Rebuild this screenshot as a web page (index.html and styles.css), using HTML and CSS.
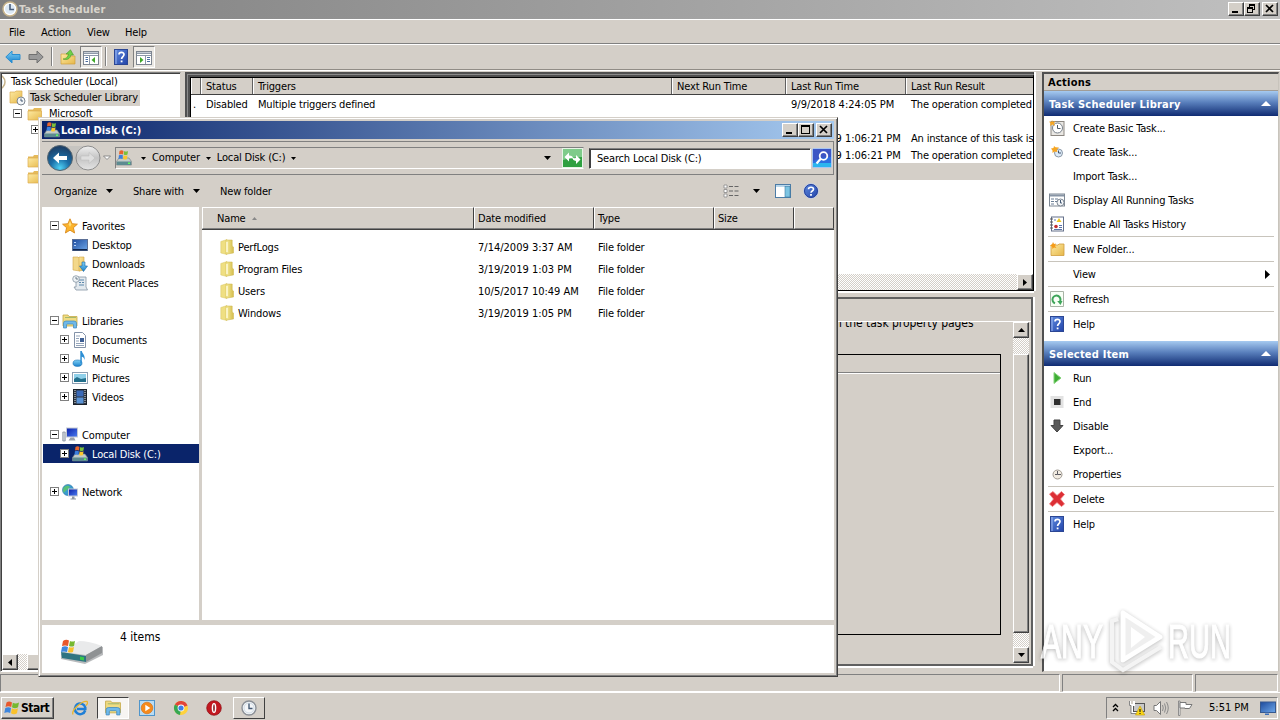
FILE: index.html
```html
<!DOCTYPE html>
<html lang="en">
<head>
  <meta charset="UTF-8" />
  <meta name="viewport" content="width=device-width, initial-scale=1.0"/>
  <title>Task Scheduler</title>
  <link rel="stylesheet" href="styles.css">
</head>
<body>
  <svg class="defs" width="0" height="0">
    <defs>
      <linearGradient id="gBlue" x1="0" y1="0" x2="0" y2="1"><stop offset="0" stop-color="#7fd0f5"/><stop offset="1" stop-color="#1b82cc"/></linearGradient>
      <linearGradient id="gFolder" x1="0" y1="0" x2="1" y2="1"><stop offset="0" stop-color="#fdeaa2"/><stop offset="1" stop-color="#e6b74a"/></linearGradient>
      <linearGradient id="gFile" x1="0" y1="0" x2="1" y2="0"><stop offset="0" stop-color="#f6ec9c"/><stop offset="1" stop-color="#d5bd4c"/></linearGradient>
      <linearGradient id="gScreen" x1="0" y1="0" x2="1" y2="1"><stop offset="0" stop-color="#0b1fa8"/><stop offset="1" stop-color="#4b7cf0"/></linearGradient>
      <linearGradient id="gDesk" x1="0" y1="0" x2="1" y2="1"><stop offset="0" stop-color="#1d4a9c"/><stop offset="1" stop-color="#6fa8ea"/></linearGradient>
      <linearGradient id="gHelp" x1="0" y1="0" x2="1" y2="1"><stop offset="0" stop-color="#5f8be0"/><stop offset="1" stop-color="#2243a8"/></linearGradient>
      <radialGradient id="gNav" cx="50%" cy="90%" r="85%"><stop offset="0" stop-color="#4fd2f5"/><stop offset=".45" stop-color="#1b6fa8"/><stop offset="1" stop-color="#1d3f66"/></radialGradient>
      <linearGradient id="gNavOff" x1="0" y1="0" x2="0" y2="1"><stop offset="0" stop-color="#f0f0f0"/><stop offset=".5" stop-color="#c4c4c4"/><stop offset="1" stop-color="#e4e4e4"/></linearGradient>
    </defs>
    <symbol id="clock" viewBox="0 0 16 16"><circle cx="8" cy="8" r="7" fill="#f4f6f8" stroke="#8a8f96" stroke-width="1.4"/><circle cx="8" cy="8" r="5" fill="none" stroke="#cfdbe6"/><path d="M8 3.5V8.5H11.5" fill="none" stroke="#445a74" stroke-width="1.4"/></symbol>
    <symbol id="clockGold" viewBox="0 0 16 16"><circle cx="8" cy="8" r="7" fill="#fff" stroke="#c7b48c" stroke-width="1.5"/><circle cx="8" cy="8" r="5" fill="#dce9f5"/><path d="M8 3V8.5H12" fill="none" stroke="#4a5f7c" stroke-width="1.6"/></symbol>
    <symbol id="arrowL" viewBox="0 0 16 16"><path d="M.8 8L7 2V5.5H15V10.5H7V14Z" fill="url(#gBlue)" stroke="#2b8ed0"/></symbol>
    <symbol id="arrowR" viewBox="0 0 16 16"><path d="M15.2 8L9 2V5.5H1V10.5H9V14Z" fill="#9a9a9a" stroke="#707070"/></symbol>
    <symbol id="folder" viewBox="0 0 16 16"><path d="M1 3.5H6L7 2H14.5V13.5H1Z" fill="#e5ba5a"/><path d="M1 5H14.5V14H1Z" fill="url(#gFolder)" stroke="#dcae50" stroke-width=".7"/></symbol>
    <symbol id="folderUp" viewBox="0 0 16 16"><path d="M1 5H8L9 7H15V15H1Z" fill="url(#gFolder)" stroke="#cf9d3e" stroke-width=".7"/><path d="M3 10C6 10 8 8 8.5 5H6L10.500 .8L13.500 6H11C10 10 7 11.500 3 10Z" fill="#6fd048" stroke="#3a8e1c" stroke-width=".5"/></symbol>
    <symbol id="folderClock" viewBox="0 0 17 16"><path d="M1 2H6L7 1H13V13H1Z" fill="url(#gFolder)" stroke="#dcae50" stroke-width=".7"/><circle cx="12" cy="11" r="4" fill="#f4f6f8" stroke="#7b8590"/><path d="M12 8.500V11H14" fill="none" stroke="#445a74"/></symbol>
    <symbol id="paneL" viewBox="0 0 16 14"><rect x=".5" y=".5" width="15" height="13" fill="#fff" stroke="#7d8590"/><path d="M1 1.500H15V3H1Z" fill="#8d98a8"/><path d="M1 4.500H15M6.500 5V13" stroke="#8d98a8"/><path d="M2.500 6.500H5M2.500 8.500H5M2.500 10.500H5" stroke="#4c6da0"/><path d="M12 6L8.500 9L12 12Z" fill="#3fa828"/></symbol>
    <symbol id="paneR" viewBox="0 0 16 14"><rect x=".5" y=".5" width="15" height="13" fill="#fff" stroke="#7d8590"/><path d="M1 1.500H15V3H1Z" fill="#8d98a8"/><path d="M1 4.500H15M9.500 5V13" stroke="#8d98a8"/><path d="M11 6.500H14M11 8.500H14M11 10.500H14" stroke="#4c6da0"/><path d="M4 6L7.500 9L4 12Z" fill="#3fa828"/></symbol>
    <symbol id="help" viewBox="0 0 14 16"><rect x=".5" y=".5" width="13" height="15" fill="url(#gHelp)" stroke="#2c4794"/><path d="M2 1V15" stroke="#9db7f0"/><path d="M5 5.600C5 2.600 10 2.600 10 5.500C10 7.500 7.600 7.600 7.600 10" fill="none" stroke="#fff" stroke-width="1.700"/><path d="M6.700 11.500H8.500V13.300H6.700Z" fill="#fff"/></symbol>
    <symbol id="helpRound" viewBox="0 0 16 16"><circle cx="8" cy="8" r="7.300" fill="url(#gHelp)" stroke="#c3cfe8"/><circle cx="8" cy="8" r="6.500" fill="none" stroke="#24409a"/><path d="M5.500 6.200C5.500 3.500 10.500 3.500 10.500 6.200C10.500 8 8 8 8 9.800" fill="none" stroke="#fff" stroke-width="1.600"/><path d="M7.100 11H8.900V12.700H7.100Z" fill="#fff"/></symbol>
    <symbol id="drive" viewBox="0 0 16 16"><path d="M3 8H13L15.500 11.500V15H.5V11.500Z" fill="#c3cbc8" stroke="#6d7b80" stroke-width=".6"/><path d="M1 11.500H15V15H1Z" fill="#5d8b90"/><path d="M12 12.500H14V14H12Z" fill="#5cff5c"/><path d="M3.500 1Q5.500 -.5 7.500 1L7 4.500Q5 3.500 3 4.500Z" fill="#e8642c"/><path d="M8.200 1Q10 2 12 1L11.500 4.500Q9.500 5.500 7.700 4.500Z" fill="#7cc03a"/><path d="M2.900 5.200Q5 4.200 6.900 5.200L6.500 9Q4.500 8 2.500 9Z" fill="#3c7fdc"/><path d="M7.600 5.200Q9.500 6.200 11.500 5.200L11 9Q9 10 7.100 9Z" fill="#fbc72e"/></symbol>
    <symbol id="winFlag" viewBox="0 0 16 16"><path d="M2.500 2.500Q5 .5 8 2.500L7.200 7Q4.500 5.500 1.500 7Z" fill="#e8582c"/><path d="M8.800 2.800Q11.500 4.500 15 2.500L14 7.300Q11 9 8 7.300Z" fill="#76b82f"/><path d="M1.300 8Q4.500 6.500 7 8L6.200 13Q3.500 11.300 .3 13Z" fill="#3e86dd"/><path d="M7.900 8.300Q11 10 13.900 8.300L13 13.300Q10 15 7 13.300Z" fill="#f9c12b"/></symbol>
    <symbol id="star" viewBox="0 0 16 16"><path d="M8 .8L10.100 5.700L15.400 6.200L11.400 9.700L12.600 15L8 12.200L3.400 15L4.600 9.700L.6 6.200L5.900 5.700Z" fill="#fcb42c" stroke="#d98a1e" stroke-width=".9"/><path d="M8 3L9.300 6.600L8 9L6.700 6.600Z" fill="#ffdf7a"/></symbol>
    <symbol id="desktop" viewBox="0 0 16 16"><rect x=".5" y="2.500" width="15" height="11" fill="url(#gDesk)" stroke="#5b6f96"/><path d="M1 12H15V13.500H1Z" fill="#10264f"/><path d="M2 5H4V6H2ZM2 8H4V9H2Z" fill="#b9d4f7"/></symbol>
    <symbol id="downloads" viewBox="0 0 16 16"><path d="M1 1H6L8 3V15L1 14Z" fill="#f3d88a" stroke="#d0a548" stroke-width=".6"/><path d="M7 1H12V14L7 15Z" fill="url(#gFolder)" stroke="#d0a548" stroke-width=".6"/><path d="M10 6H13V10H15.500L11.500 15.500L7.500 10H10Z" fill="url(#gBlue)" stroke="#1767a6" stroke-width=".6"/></symbol>
    <symbol id="recent" viewBox="0 0 16 16"><path d="M4 2H14V12L15.500 15H4L2 12H4Z" fill="#e3e9ee" stroke="#8796a3" stroke-width=".8"/><path d="M7 5H12M7 7.500H9M10 7.500H12M7 10H12" stroke="#5b87ab"/><circle cx="4" cy="4" r="3.300" fill="#eef2f5" stroke="#8796a3" stroke-width=".8"/><path d="M4 2V4H6" fill="none" stroke="#4f6474" stroke-width=".8"/></symbol>
    <symbol id="library" viewBox="0 0 16 16"><path d="M1 2H6L7 3.500H15V13H1Z" fill="#f1dc82" stroke="#c5a947" stroke-width=".8"/><path d="M3 4.500H14" stroke="#a5b86c"/><path d="M1.500 15V10Q1.500 8 4 8H12Q14.500 8 14.500 10V15H11.500V12Q11.500 11 10.500 11H5.500Q4.500 11 4.500 12V15Z" fill="#6fb9ea" stroke="#3d86bd" stroke-width=".7"/></symbol>
    <symbol id="doc" viewBox="0 0 16 16"><path d="M2.500 .5H10.500L13.500 3.500V15.500H2.500Z" fill="#fff" stroke="#8392a8"/><path d="M4 4H8M4 6.500H7M4 9H7M4 11.500H12M4 13.500H12" stroke="#93a4ba"/><rect x="8" y="6" width="4" height="4" fill="#3c5e94"/></symbol>
    <symbol id="music" viewBox="0 0 16 16"><ellipse cx="5.500" cy="12.200" rx="4.500" ry="3.200" fill="url(#gBlue)" stroke="#1a70b4" stroke-width=".6"/><path d="M8.300 12V0H9.800C10.300 3 13.500 4 12.500 9C12 6.500 11 6 9.800 5.800V12Z" fill="#2b8ed4"/></symbol>
    <symbol id="pictures" viewBox="0 0 16 16"><rect x=".5" y="2.500" width="15" height="11" fill="#fff" stroke="#8da0b4"/><rect x="2" y="4" width="12" height="8" fill="#8fd0ea"/><path d="M2 9L5 7L9 9L14 8V12H2Z" fill="#23708c"/></symbol>
    <symbol id="videos" viewBox="0 0 16 16"><rect x="1.500" y=".5" width="13" height="15" fill="#2c3440" stroke="#1c222a"/><path d="M3 1V15M13 1V15" stroke="#e0e6ea" stroke-dasharray="1 1"/><rect x="4.500" y="1.500" width="7" height="6" fill="#3b6ab8"/><rect x="4.500" y="8.500" width="7" height="6" fill="#5a93d6"/></symbol>
    <symbol id="computer" viewBox="0 0 16 16"><path d="M.8 5H3.200V14H.8Z" fill="#cdd3da" stroke="#7e8894" stroke-width=".7"/><rect x="4.500" y="1" width="11" height="9" fill="url(#gScreen)" stroke="#c5cbd6"/><path d="M8.500 10.500H12L13.500 13.500H6.500Z" fill="#9ba2ac"/></symbol>
    <symbol id="network" viewBox="0 0 16 16"><circle cx="6" cy="6" r="5.500" fill="#3a9bd0" stroke="#2b76a4" stroke-width=".6"/><path d="M2 3Q6 0 8 3L5 6Q3 7 2 9Q0 6 2 3Z" fill="#58c07a"/><rect x="6.500" y="5" width="9" height="7" fill="url(#gScreen)" stroke="#c5cbd6"/><path d="M10 12.500H12.500V14.500H14V15.500H8.500V14.500H10Z" fill="#8d96a2"/></symbol>
    <symbol id="fileFolder" viewBox="0 0 14 16"><path d="M.8 2.500L7 .5V15.500L.8 14Z" fill="#efdf82" stroke="#d9c664" stroke-width=".5"/><path d="M6 1H12.200V7L13.500 8V14L6 15.200Z" fill="url(#gFile)" stroke="#cdb54a" stroke-width=".5"/><path d="M7 3V13" stroke="#fffbe0" stroke-width="1.400"/></symbol>
    <symbol id="refresh" viewBox="0 0 16 16"><path d="M1.500 .5H14.500V15.500H1.500Z" fill="#f8fff6" stroke="#a9b3a6"/><path d="M6 12.300A4 4 0 1 1 11 10.500" fill="none" stroke="#3ea55a" stroke-width="2"/><path d="M8.200 10H13.500L11.500 14Z" fill="#3ea55a"/></symbol>
    <symbol id="basicTask" viewBox="0 0 16 16"><rect x="2" y="1.500" width="13" height="14" fill="#e9e7e3" stroke="#8c8781"/><circle cx="8.500" cy="8" r="5" fill="#fff" stroke="#77808a"/><path d="M8.500 5V8.500H11.500" fill="none" stroke="#4e5a66"/><path d="M3 0L4 2L6.500 1L5 3.500L6 6L3.500 4.500L1 6L1.500 3.500L0 1.500L2.500 2Z" fill="#f6a623"/></symbol>
    <symbol id="createTask" viewBox="0 0 16 16"><circle cx="9.500" cy="9" r="4" fill="#dceaf8" stroke="#8b98a6"/><path d="M9.500 6.500V9H12" fill="none" stroke="#44556a"/><path d="M5 2L6.500 3.200L10 3.500L8 5.500L8.300 8L5.500 7.500L3.500 9L3.500 6.500L2 4.500L4.500 4Z" fill="#f6a623"/></symbol>
    <symbol id="running" viewBox="0 0 16 16"><rect x=".5" y="2" width="15" height="12" fill="#fff" stroke="#7e8894"/><path d="M1 2.500H15V4.500H1Z" fill="#8794a5"/><path d="M2 7H5M6 7H9M2 9.500H5M6 9.500H8M2 12H5" stroke="#6b7f96"/><circle cx="11.500" cy="10.500" r="3.500" fill="#f4f6f8" stroke="#7e8894"/><path d="M11.500 8V11H13" fill="none" stroke="#445a74"/></symbol>
    <symbol id="history" viewBox="0 0 16 16"><rect x="2.500" y="1" width="12" height="14" fill="#fff" stroke="#64708a"/><path d="M1 3H4M1 6H4M1 9H4M1 12H4" stroke="#555"/><path d="M10 2L12.500 6H7.500Z" fill="#f0c81e"/><circle cx="7" cy="10.500" r="1.800" fill="#c52f2f"/><path d="M10 9.500H13M10 11.500H13M5 13.500H13M5 4H7" stroke="#5c73a8"/></symbol>
    <symbol id="newFolder" viewBox="0 0 16 16"><path d="M2 4H9L10 3H15V14.500H2Z" fill="url(#gFolder)" stroke="#cf9d3e" stroke-width=".8"/><path d="M4 1L5 3L7 2.500L6 5L7.500 7L5 6.500L3.500 8L3 5.500L1 4.500L3 3.500Z" fill="#f59b18"/></symbol>
    <symbol id="run" viewBox="0 0 16 16"><path d="M5 2.500L12 8L5 13.500Z" fill="#3fae35" stroke="#86d37c"/></symbol>
    <symbol id="end" viewBox="0 0 16 16"><rect x="1.500" y="2" width="13" height="12" fill="#e2e2e2"/><rect x="5" y="5" width="6.500" height="6" fill="#2d2d2d"/></symbol>
    <symbol id="disable" viewBox="0 0 16 16"><path d="M5 2H11V7.500H14L8 14L2 7.500H5Z" fill="#5a5a5a" stroke="#444"/></symbol>
    <symbol id="props" viewBox="0 0 16 16"><circle cx="8.500" cy="8.500" r="4.500" fill="#f2ece2" stroke="#a09a92"/><path d="M8.500 5V8.500H12M8.500 8.500H6" fill="none" stroke="#5b5b62"/></symbol>
    <symbol id="delete" viewBox="0 0 16 16"><path d="M.5 3L4 .5L8 4.500L12.500 .5L15.500 3.500L11.500 8L15.500 13L12.500 15.500L8 11.500L3.500 15.500L.5 13L4.500 8Z" fill="#dc2f35" stroke="#f0787a" stroke-width=".8"/></symbol>
    <symbol id="min" viewBox="0 0 12 10"><path d="M2 7H8V9H2Z"/></symbol>
    <symbol id="max" viewBox="0 0 12 10"><path d="M1 0H10V9H1ZM2 2V8H9V2Z" fill-rule="evenodd"/></symbol>
    <symbol id="restore" viewBox="0 0 12 10"><path d="M3 0H9V6H7V5H8V2H4V3H3ZM1 3H7V9H1ZM2 5V8H6V5Z" fill-rule="evenodd"/></symbol>
    <symbol id="close" viewBox="0 0 12 10"><path d="M2 1L9 8M9 1L2 8" stroke="#000" stroke-width="1.700" fill="none"/></symbol>
    <symbol id="down" viewBox="0 0 7 4"><path d="M0 0H7L3.500 4Z"/></symbol>
    <symbol id="up" viewBox="0 0 7 4"><path d="M0 4H7L3.500 0Z"/></symbol>
    <symbol id="left" viewBox="0 0 4 7"><path d="M4 0V7L0 3.500Z"/></symbol>
    <symbol id="right" viewBox="0 0 4 7"><path d="M0 0V7L4 3.500Z"/></symbol>
  </svg>

  <div class="scheduler">
    <div class="titlebar inactive">
      <svg class="i16"><use href="#clockGold"/></svg>
      <span class="title">Task Scheduler</span>
      <div class="win-buttons">
        <span class="wbtn"><svg><use href="#min"/></svg></span>
        <span class="wbtn"><svg><use href="#restore"/></svg></span>
        <span class="wbtn last"><svg><use href="#close"/></svg></span>
      </div>
    </div>
    <div class="menubar"><span>File</span><span>Action</span><span>View</span><span>Help</span></div>
    <div class="toolbar">
      <svg class="i16 back"><use href="#arrowL"/></svg>
      <svg class="i16 fwd"><use href="#arrowR"/></svg>
      <i class="sep"></i>
      <svg class="i16 fup"><use href="#folderUp"/></svg>
      <span class="pressed"><svg width="16" height="14"><use href="#paneL"/></svg></span>
      <i class="sep second"></i>
      <svg class="hlp" width="14" height="16"><use href="#help"/></svg>
      <span class="pressed"><svg width="16" height="14"><use href="#paneR"/></svg></span>
    </div>

    <div class="panes">
      <div class="tree">
        <div class="tree-body">
          <div class="trow root"><svg class="i16"><use href="#clockGold"/></svg><span>Task Scheduler (Local)</span></div>
          <div class="trow lib"><svg width="17" height="16"><use href="#folderClock"/></svg><span class="sel">Task Scheduler Library</span></div>
          <div class="trow ms"><i class="box minus"></i><svg class="i16"><use href="#folder"/></svg><span>Microsoft</span></div>
          <div class="trow sub"><i class="box plus"></i></div>
          <div class="trow"></div>
          <div class="trow fold"><svg class="i16"><use href="#folder"/></svg></div>
          <div class="trow fold"><svg class="i16"><use href="#folder"/></svg></div>
        </div>
        <div class="hscroll"><span class="sbtn"><svg width="4" height="7"><use href="#left"/></svg></span><i class="gap"></i><i class="thumb"></i></div>
      </div>

      <div class="center">
        <div class="tasks">
          <div class="tgrid thead"><span></span><span>Status</span><span>Triggers</span><span>Next Run Time</span><span>Last Run Time</span><span>Last Run Result</span></div>
          <div class="tgrid"><span>.</span><span>Disabled</span><span>Multiple triggers defined</span><span></span><span class="date">9/9/2018 4:24:05 PM</span><span>The operation completed</span></div>
          <div class="tgrid"><span></span><span>Ready</span><span></span><span></span><span></span><span></span></div>
          <div class="tgrid"><span></span><span></span><span></span><span></span><span class="date">3/19/2019 1:06:21 PM</span><span>An instance of this task is</span></div>
          <div class="tgrid"><span></span><span></span><span></span><span></span><span class="date">3/19/2019 1:06:21 PM</span><span>The operation completed</span></div>
          <div class="tgrid selected"><span></span><span></span><span></span><span></span><span></span><span></span></div>
          <div class="hscroll tasks-scroll"><i class="gap"></i><span class="sbtn"><svg width="4" height="7"><use href="#right"/></svg></span></div>
        </div>
        <div class="detail">
          <div class="detail-head"></div>
          <div class="detail-body">
            <div class="detail-main">
              <div class="clip"><span>in the task property pages</span></div>
              <div class="box-area"><div class="box-head"></div></div>
            </div>
            <div class="vscroll">
              <span class="sbtn"><svg width="7" height="4"><use href="#up"/></svg></span>
              <i class="gap"></i><i class="thumb"></i><i class="gap low"></i>
              <span class="sbtn"><svg width="7" height="4"><use href="#down"/></svg></span>
            </div>
          </div>
        </div>
      </div>

      <div class="actions">
        <div class="actions-head">Actions</div>
        <div class="band"><span>Task Scheduler Library</span><svg width="10" height="5" viewBox="0 0 7 4" preserveAspectRatio="none"><path d="M0 4H7L3.500 0Z" fill="#fff"/></svg></div>
        <div class="act"><svg class="i16"><use href="#basicTask"/></svg><span>Create Basic Task...</span></div>
        <div class="act"><svg class="i16"><use href="#createTask"/></svg><span>Create Task...</span></div>
        <div class="act"><i class="i16"></i><span>Import Task...</span></div>
        <div class="act"><svg class="i16"><use href="#running"/></svg><span>Display All Running Tasks</span></div>
        <div class="act"><svg class="i16"><use href="#history"/></svg><span>Enable All Tasks History</span></div>
        <hr>
        <div class="act"><svg class="i16"><use href="#newFolder"/></svg><span>New Folder...</span></div>
        <hr>
        <div class="act"><i class="i16"></i><span>View</span><svg class="more" width="5" height="9" viewBox="0 0 5 9"><path d="M0 0V9L5 4.500Z"/></svg></div>
        <hr>
        <div class="act"><svg class="i16"><use href="#refresh"/></svg><span>Refresh</span></div>
        <hr>
        <div class="act"><svg class="i16"><use href="#help"/></svg><span>Help</span></div>
        <div class="band next"><span>Selected Item</span><svg width="10" height="5" viewBox="0 0 7 4" preserveAspectRatio="none"><path d="M0 4H7L3.500 0Z" fill="#fff"/></svg></div>
        <div class="act"><svg class="i16"><use href="#run"/></svg><span>Run</span></div>
        <div class="act"><svg class="i16"><use href="#end"/></svg><span>End</span></div>
        <div class="act"><svg class="i16"><use href="#disable"/></svg><span>Disable</span></div>
        <div class="act"><i class="i16"></i><span>Export...</span></div>
        <div class="act"><svg class="i16"><use href="#props"/></svg><span>Properties</span></div>
        <hr>
        <div class="act"><svg class="i16"><use href="#delete"/></svg><span>Delete</span></div>
        <hr>
        <div class="act"><svg class="i16"><use href="#help"/></svg><span>Help</span></div>
      </div>
    </div>
    <div class="statusbar"><span></span><span></span><span></span></div>
  </div>

  <div class="taskbar">
    <span class="start"><svg class="i16"><use href="#winFlag"/></svg><b>Start</b></span>
    <span class="tb ie"><svg class="i16" viewBox="0 0 16 16"><path d="M13.200 10.500A5.300 5.300 0 1 1 13.300 7.500V9H5" fill="none" stroke="#1f7fd6" stroke-width="2.500"/><path d="M1 14.500C-1 10 10 .5 15 1.500C16 2.500 15 4.500 14 5.500" fill="none" stroke="#e9b52c" stroke-width="1.300"/></svg></span>
    <span class="tb active"><svg width="18" height="17"><use href="#library"/></svg></span>
    <span class="tb wmp"><svg class="i16" viewBox="0 0 16 16"><rect x=".5" y=".5" width="15" height="15" fill="#b9dcf3" stroke="#4f95cb"/><circle cx="8" cy="8" r="5.800" fill="#f58a1c" stroke="#d56a0c" stroke-width=".6"/><path d="M6.300 4.700L11.300 8L6.300 11.300Z" fill="#fff"/></svg></span>
    <span class="tb chrome"><svg class="i16" viewBox="0 0 16 16"><circle cx="8" cy="8" r="7" fill="#ffd23c"/><path d="M8 8L1.900 4.500A7 7 0 0 1 14.500 5.500Z" fill="#e2453a"/><path d="M8 8L7 15A7 7 0 0 1 1.900 4.500Z" fill="#37a853"/><circle cx="8" cy="8" r="3.400" fill="#fff"/><circle cx="8" cy="8" r="2.600" fill="#3f7fe8"/></svg></span>
    <span class="tb opera"><svg class="i16" viewBox="0 0 16 16"><circle cx="8" cy="8" r="7.300" fill="#c21820" stroke="#8e0b12" stroke-width=".7"/><ellipse cx="8" cy="8" rx="2.300" ry="5" fill="#fff"/><ellipse cx="8" cy="8" rx=".9" ry="3.800" fill="#8d3034"/></svg></span>
    <span class="tb raised"><svg class="i16"><use href="#clock"/></svg></span>
    <div class="tray">
      <svg class="chev" width="7" height="9" viewBox="0 0 7 9"><path d="M1 4L3.500 1.500L6 4M1 8L3.500 5.500L6 8" fill="none" stroke="#000" stroke-width="1.300"/></svg>
      <svg class="i16" viewBox="0 0 16 16"><rect x="4.500" y="3.500" width="11" height="8" fill="#c8c8c8" stroke="#555"/><path d="M1 1V5H5V1M3 5V13H8" fill="none" stroke="#fff" stroke-width="2"/><path d="M.5 1V5.500H2V13.500H8" fill="none" stroke="#555" stroke-width=".7"/><path d="M11 6L15.700 15H6.500Z" fill="#fbd714" stroke="#c29b0a" stroke-width=".6"/><path d="M11 9V12M11 13V14" stroke="#222" stroke-width="1.200"/></svg>
      <svg class="i16" viewBox="0 0 16 16"><path d="M1 5.500H3.500L7.500 1.500V14.500L3.500 10.500H1Z" fill="#fff" stroke="#777"/><path d="M9.500 5Q11 8 9.500 11M11.500 3.500Q14 8 11.500 12.500M13.500 2Q17 8 13.500 14" fill="none" stroke="#8a8a8a"/></svg>
      <svg class="i16" viewBox="0 0 16 16"><path d="M1.500 1V15.500H3V1Z" fill="#fff" stroke="#777" stroke-width=".8"/><path d="M3 2.500H9V4.500H15L12.500 8.500H8V8H3Z" fill="#fff" stroke="#777"/></svg>
      <span class="time">5:51 PM</span>
      <svg class="i16" viewBox="0 0 16 16"><rect x=".5" y="2" width="15" height="10.500" fill="url(#gDesk)" stroke="#37598f"/><path d="M5 13H9M5 14.500H9" stroke="#3c6fb8"/></svg>
    </div>
  </div>

  <div class="explorer">
    <div class="titlebar">
      <svg class="i16"><use href="#drive"/></svg>
      <span class="title">Local Disk (C:)</span>
      <div class="win-buttons">
        <span class="wbtn"><svg><use href="#min"/></svg></span>
        <span class="wbtn"><svg><use href="#max"/></svg></span>
        <span class="wbtn last"><svg><use href="#close"/></svg></span>
      </div>
    </div>
    <div class="navbar">
      <svg class="navs" width="66" height="28" viewBox="0 0 66 28">
        <path d="M13 2H42V26H13Z" fill="#c6c4c0"/>
        <circle cx="14" cy="14" r="12.500" fill="url(#gNav)" stroke="#55656f"/>
        <path d="M7 14L13 8.500V12H21V16H13V19.500Z" fill="#fff"/>
        <circle cx="42" cy="14" r="12" fill="url(#gNavOff)" stroke="#8d8d8d"/>
        <path d="M49 14L43 8.500V12H35V16H43V19.500Z" fill="#dedede" stroke="#bbb" stroke-width=".5"/>
        <path d="M57.500 12H64.500L61 15.500Z" fill="#fff" stroke="#777" stroke-width=".8"/>
      </svg>
      <div class="address">
        <svg class="i16"><use href="#drive"/></svg>
        <svg class="dd" width="5" height="3"><use href="#down"/></svg><span>Computer</span>
        <svg class="dd" width="5" height="3"><use href="#down"/></svg><span>Local Disk (C:)</span>
        <svg class="dd" width="5" height="3"><use href="#down"/></svg>
        <svg class="dd end" width="7" height="4"><use href="#down"/></svg>
        <svg class="go" width="21" height="20" viewBox="0 0 21 20"><rect x=".5" y=".5" width="20" height="19" fill="#2fa040" stroke="#e6f5e6"/><path d="M1 1H20V9Q10 9 1 12Z" fill="#7fcb8a"/><path d="M2.500 9L7 4.500V7.500Q11 7.500 11 10.500Q9 10 7 10.500V13.500ZM18.500 11.500L14 16V13Q10.500 12.500 10.500 9.500Q12 10.500 14 10V7Z" fill="#fff"/></svg>
      </div>
      <div class="search">Search Local Disk (C:)</div>
      <svg class="find" width="20" height="20" viewBox="0 0 20 20"><rect x=".5" y=".5" width="19" height="19" rx="1.500" fill="#2c6fe0" stroke="#a9c6f0"/><path d="M1 1H19V9Q10 9 1 13Z" fill="#3c56c4"/><path d="M1 15H19V19H1Z" fill="#2bb5ee"/><circle cx="11.500" cy="8" r="3.800" fill="none" stroke="#fff" stroke-width="1.800"/><path d="M9 10.500L4.500 15.500" stroke="#fff" stroke-width="2.200"/></svg>
    </div>
    <div class="commands">
      <span class="org">Organize</span><svg class="dd" width="7" height="4"><use href="#down"/></svg>
      <span class="share">Share with</span><svg class="dd" width="7" height="4"><use href="#down"/></svg>
      <span class="newf">New folder</span>
      <div class="views">
        <svg width="16" height="14" viewBox="0 0 16 14"><path d="M1 1H4V4H1ZM1 5.500H4V8.500H1ZM1 10H4V13H1Z" fill="#fff" stroke="#888" stroke-width=".8"/><path d="M6 2.500H10M11.500 2.500H15.500M6 7H10M11.500 7H15.500M6 11.500H10M11.500 11.500H15.500" stroke="#666"/></svg>
        <svg class="vdd" width="7" height="4"><use href="#down"/></svg>
        <svg class="pv" width="16" height="14" viewBox="0 0 16 14"><rect x=".5" y=".5" width="15" height="13" fill="#fff" stroke="#4c7ca6"/><path d="M1 1H15V3H1Z" fill="#b9d6ea"/><rect x="10" y="2.500" width="5" height="10.500" fill="#7cc4e2" stroke="#3d7ca6" stroke-width=".6"/></svg>
        <svg class="i16"><use href="#helpRound"/></svg>
      </div>
    </div>
    <div class="ex-body">
      <div class="nav">
        <div class="n top"><i class="box minus"></i><svg class="i16"><use href="#star"/></svg><span>Favorites</span></div>
        <div class="n kid leaf"><svg class="i16"><use href="#desktop"/></svg><span>Desktop</span></div>
        <div class="n kid leaf"><svg class="i16"><use href="#downloads"/></svg><span>Downloads</span></div>
        <div class="n kid leaf"><svg class="i16"><use href="#recent"/></svg><span>Recent Places</span></div>
        <div class="n"></div>
        <div class="n top"><i class="box minus"></i><svg class="i16"><use href="#library"/></svg><span>Libraries</span></div>
        <div class="n kid"><i class="box plus"></i><svg class="i16"><use href="#doc"/></svg><span>Documents</span></div>
        <div class="n kid"><i class="box plus"></i><svg class="i16"><use href="#music"/></svg><span>Music</span></div>
        <div class="n kid"><i class="box plus"></i><svg class="i16"><use href="#pictures"/></svg><span>Pictures</span></div>
        <div class="n kid"><i class="box plus"></i><svg class="i16"><use href="#videos"/></svg><span>Videos</span></div>
        <div class="n"></div>
        <div class="n top"><i class="box minus"></i><svg class="i16"><use href="#computer"/></svg><span>Computer</span></div>
        <div class="n kid current"><i class="box plus"></i><svg class="i16"><use href="#drive"/></svg><span>Local Disk (C:)</span></div>
        <div class="n"></div>
        <div class="n top"><i class="box plus"></i><svg class="i16"><use href="#network"/></svg><span>Network</span></div>
      </div>
      <div class="files">
        <div class="fgrid fhead"><span>Name <svg width="5" height="3"><use href="#up"/></svg></span><span>Date modified</span><span>Type</span><span>Size</span><span></span></div>
        <div class="frows">
          <div class="fgrid"><span><svg width="14" height="16"><use href="#fileFolder"/></svg><em>PerfLogs</em></span><span class="date"><em>7/14/2009 3:37 AM</em></span><span><em>File folder</em></span></div>
          <div class="fgrid"><span><svg width="14" height="16"><use href="#fileFolder"/></svg><em>Program Files</em></span><span class="date"><em>3/19/2019 1:03 PM</em></span><span><em>File folder</em></span></div>
          <div class="fgrid"><span><svg width="14" height="16"><use href="#fileFolder"/></svg><em>Users</em></span><span class="date"><em>10/5/2017 10:49 AM</em></span><span><em>File folder</em></span></div>
          <div class="fgrid"><span><svg width="14" height="16"><use href="#fileFolder"/></svg><em>Windows</em></span><span class="date"><em>3/19/2019 1:05 PM</em></span><span><em>File folder</em></span></div>
        </div>
      </div>
    </div>
    <div class="ex-details">
      <svg width="46" height="28" viewBox="0 0 46 28">
        <path d="M2 16L22 4L44 9V17L26 26L2 21Z" fill="#b9bbbd"/>
        <path d="M3 14L20 3Q30 3 43 8L27 17Z" fill="#e9eaeb"/>
        <path d="M27 17L43 8V15L27 24Z" fill="#8f9294"/>
        <path d="M2 14L27 18V24L3 20Z" fill="#2f7482"/>
        <path d="M21 18.500L25 19.200V22.500L21 21.800Z" fill="#39c94a"/>
        <path d="M4 3Q7 1 10 2.500L9 8Q6 7 3 8Z" fill="#e8582c"/><path d="M11 3Q13 4 16 3L15 8Q12 9 10 8Z" fill="#76b82f"/>
        <path d="M3 9Q6 7.500 9 9L8 14Q5 13 2 14Z" fill="#3e86dd"/><path d="M10 9Q12 10 15 9L14 14Q11 15 9 14Z" fill="#f9c12b"/>
      </svg>
      <span>4 items</span>
    </div>
  </div>

  <svg class="watermark" width="204" height="76" viewBox="0 0 204 76">
    <g fill="#fff" stroke="#fff" stroke-width="1.200">
      <text x="2" y="53" textLength="62" lengthAdjust="spacingAndGlyphs">ANY</text>
      <text x="129" y="53" textLength="63" lengthAdjust="spacingAndGlyphs">RUN</text>
    </g>
    <path d="M79 14L73 16V57L84 65L122 42" fill="none" stroke="#f2f2f2" stroke-width="4"/>
    <path d="M84 8V55L121 32Z" fill="#ececec" stroke="#fff" stroke-width="5" stroke-linejoin="round"/>
    <path d="M92 22L106 32L92 43Z" fill="#fff"/>
  </svg>
</body>
</html>
```
FILE: styles.css
```css
* {
  box-sizing: border-box;
}

body {
  margin: 0;
  width: 1280px;
  height: 720px;
  overflow: hidden;
  position: relative;
  background: #d4cfc8;
  color: #000;
  font-family: 'DejaVu Sans Condensed', 'DejaVu Sans', sans-serif;
  font-size: 11px;
  letter-spacing: -0.17px;
  line-height: 14px;
  white-space: nowrap;
}

em {
  font-style: normal;
}

.date {
  letter-spacing: 0;
}

.defs {
  position: absolute;
}

svg {
  display: block;
  flex: none;
}

.i16 {
  width: 16px;
  height: 16px;
  flex: none;
}

/* text sits one pixel under the middle of its row */
.title,
.menubar span,
.tgrid span,
.act span,
.band span,
.n span,
.frows em,
.commands > span,
.time {
  padding-top: 2px;
}

/* scheduler window */
.scheduler {
  height: 692px;
  display: flex;
  flex-direction: column;
}

.titlebar {
  height: 18px;
  display: flex;
  align-items: center;
  padding: 0 2px;
  background: linear-gradient(to right, #0a246a, #a6caf0);
  color: #fff;
  font-weight: bold;
  letter-spacing: 0;
}

.titlebar.inactive {
  height: 19px;
  background: linear-gradient(to right, #808080, #c0c0c0);
  color: #d8d4cc;
  padding: 0 2px 1px;
  letter-spacing: 0.2px;
}

.titlebar .title {
  margin-left: 1px;
}

.win-buttons {
  display: flex;
  margin-left: auto;
}

.wbtn,
.sbtn {
  width: 16px;
  height: 14px;
  background: #d4cfc8;
  border: 1px solid;
  border-color: #fff #404040 #404040 #fff;
  box-shadow: inset -1px -1px #808080;
}

.wbtn svg {
  width: 12px;
  height: 10px;
  margin: 1px 0 0 1px;
}

.wbtn.last {
  margin-left: 2px;
}

.sbtn {
  height: 16px;
  flex: none;
  display: flex;
  align-items: center;
  justify-content: center;
}

.menubar {
  height: 25px;
  display: flex;
  align-items: center;
  padding-left: 9px;
  border-top: 1px solid #fff;
  border-bottom: 1px solid #808080;
}

.menubar span:nth-child(1) { width: 32px; }
.menubar span:nth-child(2) { width: 46px; }
.menubar span:nth-child(3) { width: 38px; }

.toolbar {
  height: 27px;
  display: flex;
  align-items: center;
  padding: 0 0 2px 5px;
  border-top: 1px solid #fff;
  border-bottom: 1px solid #fff;
  box-shadow: inset 0 -1px #908c86;
  margin-bottom: 1px;
}

.toolbar .fwd { margin-left: 7px; }
.toolbar .fup { margin: 0 4px 0 7px; }
.toolbar .hlp { margin: 0 5px 0 7px; }

.sep {
  width: 2px;
  height: 19px;
  margin-left: 7px;
  border-left: 1px solid #808080;
  border-right: 1px solid #fff;
}

.sep.second {
  margin-left: 3px;
}

.pressed {
  width: 22px;
  height: 22px;
  padding: 4px 0 0 2px;
  background: #ebe8e3;
  border: 1px solid;
  border-color: #808080 #fff #fff #808080;
}

.panes {
  display: flex;
  height: 600px;
}

.tree {
  width: 181px;
  display: flex;
  flex-direction: column;
  background: #fff;
  border: 1px solid;
  border-color: #808080 #d4cfc8 #fff #808080;
  box-shadow: inset 1px 1px #404040;
  padding: 0 1px 1px 1px;
}

.tree-body {
  flex: 1;
  overflow: hidden;
  margin-top: 1px;
}

.trow {
  height: 16px;
  display: flex;
  align-items: center;
}

.trow.root svg { margin-left: -12px; }
.trow.root span { margin-left: 5px; }
.trow.lib svg { margin-left: 7px; }
.trow.lib .sel { background: #d4cfc8; padding: 1px 2px; margin-left: 2px; }
.trow.ms { height: 15px; padding-left: 11px; }
.trow.ms svg { margin: 0 6px 0 5px; }
.trow.sub { padding-left: 29px; }
.trow.fold { padding-left: 25px; }

.box {
  width: 9px;
  height: 9px;
  flex: none;
  border: 1px solid #808080;
  background: linear-gradient(#000, #000) center / 5px 1px no-repeat #fff;
}

.box.plus {
  background: linear-gradient(#000, #000) center / 5px 1px no-repeat, linear-gradient(#000, #000) center / 1px 5px no-repeat #fff;
}

.hscroll {
  display: flex;
  height: 16px;
}

.gap,
.vscroll {
  background: repeating-conic-gradient(#fff 0 25%, #d4cfc8 0 50%) 0 0 / 2px 2px;
}

.tree .gap { width: 9px; }

.thumb {
  flex: 1;
  background: #d4cfc8;
  border: 1px solid;
  border-color: #fff #404040 #404040 #fff;
  box-shadow: inset -1px -1px #808080;
}

.center {
  width: 854px;
  padding-left: 4px;
  display: flex;
  flex-direction: column;
}

.tasks {
  height: 219px;
  margin-right: 1px;
  display: flex;
  flex-direction: column;
  background: linear-gradient(#fff, #fff) padding-box, linear-gradient(#8a8a8a, #8a8a8a) border-box;
  border: 5px double #505050;
  border-right: 1px solid #000;
  border-bottom: 1px solid #000;
  box-shadow: inset 1px 1px #000, 2px 0 #fff, 0 2px #fff;
  padding: 1px 0 0 1px;
}

.tgrid {
  display: grid;
  grid-template-columns: 10px 52px 419px 114px 120px 1fr;
  height: 17px;
  align-items: center;
}

.tgrid span {
  padding-left: 5px;
  overflow: hidden;
}

.tgrid span:first-child {
  padding-left: 2px;
}

.thead {
  background: #d4cfc8;
  border-bottom: 1px solid #404040;
  align-items: stretch;
}

.tgrid.thead span {
  padding: 2px 0 0 4px;
  border-left: 1px solid #fff;
  border-right: 1px solid #606060;
}

.tgrid.thead span:last-child {
  border-right: 0;
}

.tgrid.selected {
  background: #d4cfc8;
}

.tasks-scroll {
  margin-top: auto;
}

.tasks-scroll .gap {
  flex: 1;
}

.detail {
  margin: 6px 2px 6px 0;
  flex: 1;
  display: flex;
  flex-direction: column;
  border: 1px solid;
  border-color: #606060;
  border-width: 2px 2px 2px 1px;
  box-shadow: 2px 0 #fff, 0 2px #fff;
}

.detail-head {
  height: 23px;
  border-bottom: 1px solid #fff;
}

.detail-body {
  flex: 1;
  display: flex;
}

.detail-main {
  width: 827px;
  padding-right: 12px;
}

.clip {
  height: 32px;
  overflow: hidden;
  padding-left: 646px;
}

.clip span {
  display: block;
  margin-top: -6px;
  font-size: 12px;
  letter-spacing: -0.05px;
}

.box-area {
  height: 281px;
  margin-left: 20px;
  border: 1px solid #000;
}

.box-head {
  height: 18px;
  border-bottom: 1px solid #808080;
  box-shadow: 0 1px #fff;
}

.vscroll {
  width: 16px;
  display: flex;
  flex-direction: column;
  margin-bottom: 1px;
}

.vscroll .gap { height: 16px; }
.vscroll .gap.low { height: 14px; }

.actions {
  width: 237px;
  margin-left: auto;
  background: #fff;
  border: 1px solid #808080;
  border-left: 2px solid #505050;
  border-top: 2px solid #505050;
  border-right: 1px solid #c8c4bc;
  border-bottom: 1px solid #d4cfc8;
  margin-right: 1px;
}

.actions-head {
  height: 17px;
  padding: 2px 0 0 4px;
  background: #d4cfc8;
  border-bottom: 1px solid #a09c96;
  font-weight: bold;
  letter-spacing: 0.25px;
}

.band {
  height: 25px;
  display: flex;
  align-items: center;
  justify-content: space-between;
  padding: 0 7px 0 5px;
  background: linear-gradient(#a6caf0, #5a80bd 45%, #0f2b72);
  color: #fff;
  font-weight: bold;
  letter-spacing: 0.22px;
}

.band.next {
  margin-top: 5px;
}

.act {
  height: 24px;
  display: flex;
  align-items: center;
  padding-left: 5px;
}

.act span {
  margin-left: 8px;
}

.act .more {
  margin-left: auto;
  margin-right: 8px;
}

hr {
  height: 1px;
  margin: 0 4px;
  border: 0;
  background: #c8c4bc;
}

.statusbar {
  height: 20px;
  display: flex;
  padding-top: 2px;
  gap: 2px;
}

.statusbar span {
  width: 131px;
  border: 1px solid;
  border-color: #808080 #fff #fff #808080;
}

.statusbar span:first-child { width: 1060px; }
.statusbar span:last-child { width: 83px; }

/* taskbar */
.taskbar {
  height: 28px;
  display: flex;
  align-items: center;
  padding: 2px 2px 0 1px;
  border-top: 1px solid #fff;
}

.start {
  width: 53px;
  height: 22px;
  display: flex;
  align-items: center;
  padding-left: 2px;
  border: 1px solid;
  border-color: #fff #404040 #404040 #fff;
  box-shadow: inset -1px -1px #808080;
}

.start b {
  margin-left: 1px;
  font-size: 12px;
  letter-spacing: -0.5px;
}

.tb {
  display: flex;
  align-items: center;
  justify-content: center;
}

.tb.ie { margin-left: 18px; }
.tb.wmp { margin-left: 10px; }
.tb.chrome { margin-left: 18px; }
.tb.opera { margin-left: 17px; }

.tb.active {
  width: 32px;
  height: 22px;
  margin-left: 9px;
  background: #f7f5f2;
  border: 1px solid;
  border-color: #404040 #fff #fff #404040;
}

.tb.raised {
  width: 32px;
  height: 22px;
  margin-left: 11px;
  border: 1px solid;
  border-color: #fff #404040 #404040 #fff;
}

.tray {
  width: 172px;
  height: 22px;
  margin-left: auto;
  display: flex;
  align-items: center;
  gap: 8px;
  padding-left: 5px;
  border: 1px solid;
  border-color: #808080 #fff #fff #808080;
}

.tray .chev { margin-right: 2px; }
.tray .time { width: 43px; margin-left: 8px; padding-top: 0; letter-spacing: 0; }

/* explorer window on the desktop */
.explorer {
  position: absolute;
  left: 38px;
  top: 117px;
  width: 800px;
  height: 560px;
  display: flex;
  flex-direction: column;
  background: #d4cfc8;
  border: 1px solid;
  border-color: #d4cfc8 #404040 #404040 #d4cfc8;
  box-shadow: inset 1px 1px #fff, inset -1px -1px #808080;
  padding: 3px;
}

.explorer .titlebar {
  flex: none;
  padding: 0 2px;
}

.navbar {
  height: 34px;
  display: flex;
  align-items: center;
  padding-left: 4px;
  margin-top: 2px;
  border: 1px solid #808080;
  border-left: 0;
}

.address {
  width: 469px;
  height: 22px;
  margin-left: 3px;
  display: flex;
  align-items: center;
  border: 1px solid;
  border-color: #808080 #d4cfc8 #fff #808080;
}

.address span { margin: 0 6px 1px 6px; }
.address > .i16 { margin-right: 9px; }
.address .end { margin: 0 11px 0 auto; }

.search {
  width: 222px;
  height: 21px;
  margin-left: 5px;
  padding: 3px 0 0 7px;
  background: #fff;
  border: 1px solid;
  border-color: #808080 #fff #fff #404040;
  box-shadow: inset 1px 1px #404040;
}

.find {
  margin-left: 1px;
}

.commands {
  height: 32px;
  display: flex;
  align-items: center;
  padding-left: 12px;
}

.commands .org { width: 52px; }
.commands .share { width: 60px; margin-left: 20px; }
.commands .newf { margin-left: 20px; }

.views {
  display: flex;
  align-items: center;
  margin-left: auto;
  margin-right: 15px;
}

.views .vdd { margin: 0 15px 0 14px; }
.views .pv { margin-right: 12px; }

.ex-body {
  height: 413px;
  display: flex;
  gap: 3px;
}

.nav {
  width: 157px;
  background: #fff;
  padding: 9px 0 0 1px;
}

.n {
  height: 19px;
  display: flex;
  align-items: center;
}

.n.top { padding-left: 7px; }
.n.top .box { margin-right: 3px; }
.n.top span { margin-left: 4px; }
.n.kid { padding-left: 17px; }
.n.kid .box { margin-right: 3px; }
.n.leaf { padding-left: 29px; }
.n.kid span { margin-left: 4px; }

.n.current {
  background: #0a246a;
  color: #fff;
}

.files {
  flex: 1;
  background: #fff;
}

.fgrid {
  display: grid;
  grid-template-columns: 272px 120px 120px 80px 1fr;
  height: 22px;
}

.fgrid span {
  display: flex;
  align-items: center;
  padding-left: 4px;
}

.fhead {
  height: 23px;
  background: #d4cfc8;
  border-bottom: 1px solid #404040;
}

.fhead span {
  border: 1px solid;
  border-color: #fff #404040 #808080 #fff;
  padding: 2px 0 0 3px;
}

.fhead span:first-child { padding-left: 14px; }

.fhead svg {
  margin: -2px 0 0 6px;
  fill: #888;
}

.frows { padding-top: 6px; }
.frows .fgrid span:first-child { padding-left: 18px; }
.frows svg { margin-right: 4px; }

.ex-details {
  flex: 1;
  display: flex;
  margin-top: 5px;
  padding: 13px 0 0 17px;
  background: #fff;
}

.ex-details span {
  margin: -8px 0 0 15px;
  font-size: 12px;
  letter-spacing: 0;
}

/* watermark over everything */
.watermark {
  position: absolute;
  left: 1039px;
  top: 605px;
  opacity: 0.8;
  filter: drop-shadow(0 1px 2px rgba(0, 0, 0, 0.35));
  font-family: 'Liberation Sans', sans-serif;
  font-size: 48px;
  letter-spacing: 0;
}
```
